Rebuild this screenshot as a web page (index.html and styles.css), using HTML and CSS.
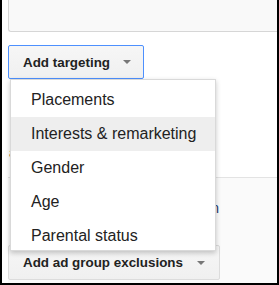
FILE: index.html
```html
<!DOCTYPE html>
<html>
<head>
<meta charset="utf-8">
<link rel="stylesheet" href="styles.css">
</head>
<body>
<div class="frame">
  <div class="top-box"></div>
  <button class="btn btn-active">Add targeting <span class="caret"></span></button>
  <div class="section">
    <div class="section-label">a</div>
  </div>
  <div class="lower">
    <div class="lower-row"><span class="lower-text">exclusion</span></div>
    <button class="btn btn-lower">Add ad group exclusions <span class="caret"></span></button>
  </div>
  <ul class="menu">
    <li class="menu-item">Placements</li>
    <li class="menu-item is-hover">Interests &amp; remarketing</li>
    <li class="menu-item">Gender</li>
    <li class="menu-item">Age</li>
    <li class="menu-item">Parental status</li>
  </ul>
</div>
</body>
</html>
```
FILE: styles.css
```css
* { box-sizing: border-box; }
html, body { margin: 0; padding: 0; background: #fff; }
body { font-family: "Liberation Sans", Arial, sans-serif; }

.frame {
  position: relative;
  width: 279px;
  height: 285px;
  border-left: 2px solid #000;
  border-right: 2px solid #000;
  border-bottom: 2px solid #000;
  overflow: hidden;
  display: flex;
  flex-direction: column;
  align-items: flex-start;
  background: #fff;
}

.top-box {
  margin-left: 6px;
  align-self: stretch;
  height: 32px;
  flex: none;
  background: #f9f9f9;
  border-left: 1px solid #d6d6d6;
  border-bottom: 1px solid #d6d6d6;
  border-bottom-left-radius: 3px;
}

.btn {
  display: inline-flex;
  align-items: center;
  flex: none;
  white-space: nowrap;
  margin-left: 6px;
  font-family: "Liberation Sans", Arial, sans-serif;
  font-weight: bold;
  font-size: 13.4px;
  color: #222;
  background: linear-gradient(#f6f6f6, #f0f0f0);
  border: 1px solid #dcdcdc;
  border-radius: 2px;
  padding: 0 12px 0 14px;
}

.btn-active {
  margin-top: 13px;
  height: 34px;
  border-color: #4d90fe;
}

.caret {
  display: inline-block;
  flex: none;
  width: 0;
  height: 0;
  margin-left: 13px;
  border-left: 4px solid transparent;
  border-right: 4px solid transparent;
  border-top: 4px solid #777;
}

.section {
  height: 98px;
  flex: none;
  align-self: stretch;
  padding: 68px 0 0 7px;
}

.section-label {
  font-size: 12px;
  line-height: 12px;
  color: #8a5a2b;
}

.lower {
  flex: 1;
  align-self: stretch;
  margin-left: 6px;
  border-top: 1px solid #e3e3e3;
  background: #fafafa;
  display: flex;
  flex-direction: column;
  align-items: flex-start;
}

.lower-row {
  margin-top: 21px;
  width: 211px;
  text-align: right;
  white-space: nowrap;
  height: 16px;
}

.lower-text {
  font-size: 14px;
  line-height: 16px;
  color: #1f3a6e;
}

.btn-lower {
  margin-left: 0;
  margin-top: 30px;
  height: 35px;
  padding-right: 14px;
}

.btn-lower .caret {
  margin-left: 14px;
}

.menu {
  position: absolute;
  left: 8px;
  top: 79px;
  width: 206px;
  height: 172px;
  margin: 0;
  padding: 3px 0 0 0;
  list-style: none;
  background: #fff;
  border: 1px solid rgba(0, 0, 0, 0.15);
  box-shadow: 0 2px 5px rgba(0, 0, 0, 0.22);
  overflow: hidden;
}

.menu-item {
  height: 34px;
  display: flex;
  align-items: center;
  padding-left: 20px;
  font-size: 16px;
  color: #222;
}

.menu-item.is-hover {
  background: #eeeeee;
}
```
